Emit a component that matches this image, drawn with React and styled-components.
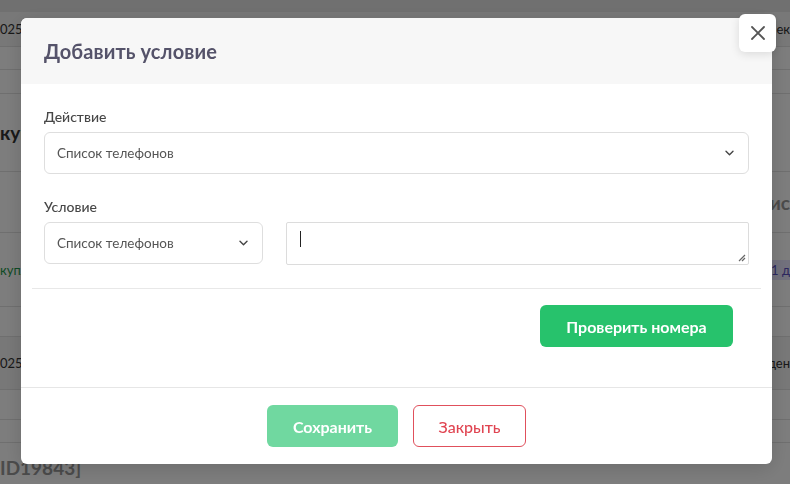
import styled, { createGlobalStyle } from "styled-components";

const GlobalStyle = createGlobalStyle`
  html, body {
    margin: 0;
    padding: 0;
    width: 790px;
    height: 484px;
    overflow: hidden;
    background: #ffffff;
    font-family: "Lato", "Noto Sans", sans-serif;
  }
`;

/* page behind the modal */

const Page = styled.div`
  width: 790px;
  height: 484px;
  background: #fff;
  box-sizing: border-box;
  border-top: 12px solid #e4e4e4;
`;

const Row = styled.div`
  height: ${({ h }) => h}px;
  display: flex;
  align-items: center;
  justify-content: space-between;
  border-bottom: 1px solid #e2e2e2;
  background: ${({ shade }) => (shade ? "#f4f4f4" : "#fff")};
  font-size: ${({ big }) => (big ? "19px" : "13px")};
  font-weight: ${({ big }) => (big ? 700 : 400)};
  color: #333;
  box-sizing: border-box;
`;

const Cell = styled.span`
  color: ${({ tone }) => tone || "#333"};
  background: ${({ chip }) => chip || "transparent"};
  padding: 2px 0;
  white-space: nowrap;
`;

const Overlay = styled.div`
  position: fixed;
  inset: 0;
  background: rgba(0, 0, 0, 0.51);
`;

/* modal */

const Modal = styled.div`
  position: absolute;
  left: 21px;
  top: 18px;
  width: 751px;
  background: #fff;
  border-radius: 6px;
  box-shadow: 0 4px 20px rgba(0, 0, 0, 0.15);
`;

const Header = styled.div`
  height: 66px;
  display: flex;
  align-items: center;
  padding: 0 23px;
  background: #f7f7f7;
  border-radius: 6px 6px 0 0;
  font-size: 20px;
  font-weight: 700;
  color: #55536a;
  letter-spacing: 0.1px;
`;

const CloseButton = styled.button`
  position: absolute;
  top: -4px;
  right: -4px;
  width: 37px;
  height: 38px;
  border: none;
  border-radius: 6px;
  background: #fff;
  box-shadow: 0 2px 10px rgba(0, 0, 0, 0.12);
  display: flex;
  align-items: center;
  justify-content: center;
  padding: 0;
  cursor: pointer;
`;

const Body = styled.div`
  padding: 24px 23px 0 23px;
`;

const Label = styled.div`
  font-size: 14px;
  line-height: 18px;
  font-weight: 500;
  color: #474747;
  margin-bottom: 6px;
`;

const Field = styled.div`
  margin-bottom: ${({ mb }) => mb}px;
`;

const Select = styled.div`
  width: ${({ w }) => w};
  height: 42px;
  box-sizing: border-box;
  border: 1px solid #dedede;
  border-radius: 6px;
  display: flex;
  align-items: center;
  justify-content: space-between;
  padding: 0 14px 0 12px;
  font-size: 13.5px;
  color: #555;
  flex-shrink: 0;
`;

const ConditionRow = styled.div`
  display: flex;
  gap: 23px;
`;

const TextArea = styled.div`
  position: relative;
  flex: 1;
  height: 43px;
  box-sizing: border-box;
  border: 1px solid #dcdcdc;
  border-radius: 2px;
  padding: 8px 13px;
`;

const Caret = styled.div`
  width: 1px;
  height: 16px;
  background: #222;
`;

const Grip = styled.svg`
  position: absolute;
  right: 2px;
  bottom: 2px;
`;

const Divider = styled.div`
  height: 1px;
  background: #e8e8e8;
  margin: 23px -12px 0;
`;

const Actions = styled.div`
  display: flex;
  justify-content: flex-end;
  padding: 16px 16px 40px 0;
`;

const Footer = styled.div`
  border-top: 1px solid #e6e6e6;
  display: flex;
  justify-content: center;
  gap: 15px;
  padding: 17px 0 17px;
`;

const Button = styled.button`
  height: 42px;
  width: ${({ w }) => w}px;
  border-radius: 6px;
  font-family: inherit;
  font-size: 16px;
  cursor: pointer;
  border: 1px solid ${({ variant }) =>
    variant === "outline" ? "#e0505c" : "transparent"};
  color: ${({ variant }) => (variant === "outline" ? "#e04552" : "#fff")};
  background: ${({ variant }) =>
    variant === "primary"
      ? "#27c26c"
      : variant === "disabled"
      ? "#70d8a0"
      : "#fff"};
  font-weight: ${({ variant }) => (variant === "outline" ? 500 : 700)};
`;

const Chevron = () => (
  <svg width="9" height="6" viewBox="0 0 9 6">
    <path d="M1 1.2l3.5 3.5 3.5-3.5" fill="none" stroke="#444" strokeWidth="1.4" strokeLinecap="round" strokeLinejoin="round" />
  </svg>
);

const App = () => {
  return (
    <>
      <GlobalStyle />
      <Page>
        <Row h={35} shade>
          <Cell>025</Cell>
          <Cell>ек</Cell>
        </Row>
        <Row h={23} />
        <Row h={24} />
        <Row h={78} big>
          <Cell>купки</Cell>
          <Cell />
        </Row>
        <Row h={61} big>
          <Cell />
          <Cell tone="#999">рис</Cell>
        </Row>
        <Row h={74}>
          <Cell tone="#1f9a4c">купл</Cell>
          <Cell tone="#5a4fc0" chip="#e9e6ff">1 д</Cell>
        </Row>
        <Row h={30} />
        <Row h={53} shade>
          <Cell>025</Cell>
          <Cell>ден</Cell>
        </Row>
        <Row h={30} />
        <Row h={23} />
        <Row h={50} big>
          <Cell tone="#999">ID19843]</Cell>
          <Cell />
        </Row>
      </Page>
      <Overlay>
        <Modal>
          <CloseButton>
            <svg width="16" height="16" viewBox="0 0 16 16">
              <path d="M2 2l12 12M14 2L2 14" stroke="#555" strokeWidth="1.8" strokeLinecap="round" />
            </svg>
          </CloseButton>
          <Header>Добавить условие</Header>
          <Body>
            <Field mb={24}>
              <Label>Действие</Label>
              <Select w="100%">
                Список телефонов
                <Chevron />
              </Select>
            </Field>
            <Field mb={0}>
              <Label>Условие</Label>
              <ConditionRow>
                <Select w="219px">
                  Список телефонов
                  <Chevron />
                </Select>
                <TextArea>
                  <Caret />
                  <Grip width="9" height="9" viewBox="0 0 9 9">
                    <path d="M8 2L2 8M8 5L5 8" stroke="#666" strokeWidth="1.2" />
                  </Grip>
                </TextArea>
              </ConditionRow>
            </Field>
            <Divider />
            <Actions>
              <Button variant="primary" w={193}>Проверить номера</Button>
            </Actions>
          </Body>
          <Footer>
            <Button variant="disabled" w={131}>Сохранить</Button>
            <Button variant="outline" w={113}>Закрыть</Button>
          </Footer>
        </Modal>
      </Overlay>
    </>
  );
};

export default App;
